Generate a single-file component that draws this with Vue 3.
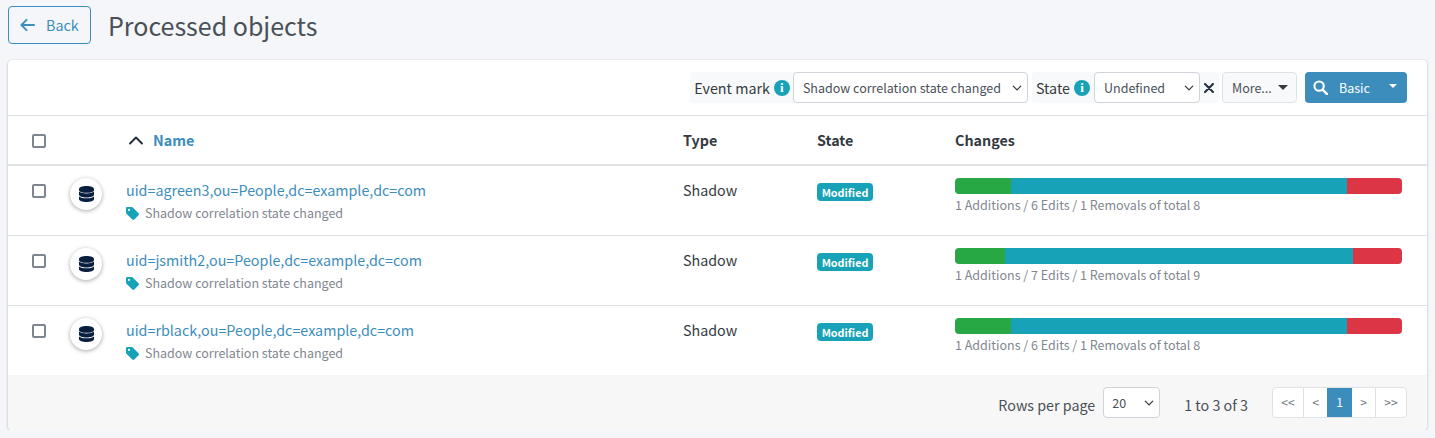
<script setup>
const BAR_WIDTH = 447
const rows = [
  { name: 'uid=agreen3,ou=People,dc=example,dc=com', add: 1, edit: 6, rem: 1 },
  { name: 'uid=jsmith2,ou=People,dc=example,dc=com', add: 1, edit: 7, rem: 1 },
  { name: 'uid=rblack,ou=People,dc=example,dc=com', add: 1, edit: 6, rem: 1 },
]
const total = (r) => r.add + r.edit + r.rem
const segWidth = (v, r) => Math.ceil((BAR_WIDTH * v) / total(r)) + 'px'
const pages = ['<<', '<', '1', '>', '>>']
</script>

<template>
  <div class="page">
    <header class="head">
      <button class="back" type="button">
        <svg class="back-icon" viewBox="0 0 16 14" width="15" height="14" aria-hidden="true">
          <path d="M7 1.500 1.500 7 7 12.500M2 7h13" fill="none" stroke="currentColor" stroke-width="2" stroke-linecap="round" stroke-linejoin="round" />
        </svg>
        <span>Back</span>
      </button>
      <h1 class="title">Processed objects</h1>
    </header>

    <section class="card">
      <div class="toolbar">
        <div class="group">
          <label class="lab">Event mark</label>
          <span class="info">i</span>
          <select class="sel sel-mark"><option>Shadow correlation state changed</option></select>
        </div>
        <div class="group group-state">
          <label class="lab">State</label>
          <span class="info">i</span>
          <select class="sel sel-state"><option>Undefined</option></select>
          <svg class="clear" viewBox="0 0 10 10" width="10" height="10" aria-hidden="true">
            <path d="M1 1l8 8M9 1 1 9" stroke="#212c3a" stroke-width="2" stroke-linecap="round" />
          </svg>
        </div>
        <button class="more" type="button">More...<span class="caret dark"></span></button>
        <button class="basic" type="button">
          <svg class="search" viewBox="0 0 16 16" width="15" height="15" aria-hidden="true">
            <circle cx="6.500" cy="6.500" r="5" fill="none" stroke="#fff" stroke-width="2.200" />
            <path d="M10.500 10.500 15 15" stroke="#fff" stroke-width="2.600" stroke-linecap="round" />
          </svg>
          <span class="basic-label">Basic</span>
          <span class="caret light"></span>
        </button>
      </div>

      <div class="row header">
        <div class="c-first"><span class="check"></span></div>
        <div class="c-name">
          <svg class="sort" viewBox="0 0 16 10" width="16" height="10" aria-hidden="true">
            <path d="M2 8.500 8 2.500l6 6" fill="none" stroke="#24303f" stroke-width="2" stroke-linecap="round" stroke-linejoin="round" />
          </svg>
          <a class="sort-link">Name</a>
        </div>
        <div class="th">Type</div>
        <div class="th">State</div>
        <div class="th">Changes</div>
      </div>

      <div v-for="r in rows" :key="r.name" class="row body">
        <div class="c-first">
          <span class="check"></span>
          <span class="avatar">
            <svg viewBox="0 0 15 16" width="15" height="16" aria-hidden="true">
              <path d="M0 3C0 1.300 3.400 0 7.500 0S15 1.300 15 3v.9c0 1.700-3.400 2.900-7.500 2.900S0 5.600 0 3.900V3Z" fill="#081f3f" />
              <path d="M0 5.600C1.500 6.900 4.300 7.500 7.500 7.500S13.500 6.900 15 5.600v3.200c0 1.600-3.400 2.800-7.500 2.800S0 10.400 0 8.800V5.600Z" fill="#081f3f" />
              <path d="M0 10.500c1.500 1.300 4.300 1.800 7.500 1.800s6-.5 7.500-1.800v2.700c0 1.600-3.400 2.800-7.500 2.800S0 14.800 0 13.200v-2.700Z" fill="#081f3f" />
            </svg>
          </span>
        </div>
        <div class="cell-name">
          <a class="link">{{ r.name }}</a>
          <div class="mark">
            <svg class="tag" viewBox="0 0 14 14" width="13" height="13" aria-hidden="true">
              <path d="M0 1.300C0 .6.600 0 1.300 0h4.900c.4 0 .8.200 1.100.5l6.200 6.200c.6.600.6 1.500 0 2.100l-4.500 4.600c-.6.600-1.600.6-2.200 0L.5 7.300C.2 7 0 6.600 0 6.200V1.300Zm3.200.7a1.100 1.100 0 1 0 0 2.200 1.100 1.100 0 0 0 0-2.200Z" fill="#17a2b8" fill-rule="evenodd" />
            </svg>
            <span>Shadow correlation state changed</span>
          </div>
        </div>
        <div class="td">Shadow</div>
        <div class="td"><span class="badge">Modified</span></div>
        <div class="changes">
          <div class="bar">
            <span class="seg add" :style="{ width: segWidth(r.add, r) }"></span>
            <span class="seg edit" :style="{ width: segWidth(r.edit, r) }"></span>
            <span class="seg rem"></span>
          </div>
          <div class="summary">{{ r.add }} Additions / {{ r.edit }} Edits / {{ r.rem }} Removals of total {{ total(r) }}</div>
        </div>
      </div>

      <footer class="foot">
        <span class="rpp">Rows per page</span>
        <select class="sel sel-rows"><option>20</option></select>
        <span class="count">1 to 3 of 3</span>
        <nav class="pager">
          <a v-for="p in pages" :key="p" class="pg" :class="{ on: p === '1' }">{{ p }}</a>
        </nav>
      </footer>
    </section>
  </div>
</template>

<style>
html, body { margin: 0; background: #f4f6f9; }
</style>

<style scoped>
.page {
  font-family: "Noto Sans CJK SC", "Noto Sans", sans-serif;
  font-size: 14.300px;
  line-height: 22px;
  color: #343a40;
  padding: 6px 8px 0;
}
.head { display: flex; align-items: center; height: 38px; gap: 17px; }
.back {
  box-sizing: border-box; width: 83px; height: 38px; flex: none;
  display: flex; align-items: center; gap: 11px; padding: 0 11px;
  border: 1px solid #3c8dbc; border-radius: 4px; background: transparent;
  color: #3c8dbc; font: inherit;
}
.back-icon { flex: none; }
.title { margin: 0; font-size: 25px; line-height: 38px; font-weight: 400; color: #495057; }
.card {
  margin-top: 16px; background: #fff; border-radius: 4px; overflow: hidden;
  box-shadow: 0 0 1px rgba(0,0,0,.2), 0 1px 3px rgba(0,0,0,.2);
}
.toolbar {
  display: flex; justify-content: flex-end; align-items: flex-start;
  height: 56px; box-sizing: border-box; padding: 12px 20px 0 0; border-bottom: 1px solid #dee2e6;
}
.group {
  display: flex; align-items: center; height: 31px; background: #f8f9fa;
  border-radius: 4px; padding-left: 4px;
}
.group-state { margin-left: 4px; margin-right: 3px; padding-right: 5px; }
.lab { color: #343a40; margin-right: 4px; }
.info {
  width: 16px; height: 16px; border-radius: 50%; background: #17a2b8; color: #fff;
  font-family: "Liberation Serif", serif; font-size: 13px; font-weight: 700; line-height: 16px;
  text-align: center; margin-right: 3px; flex: none;
}
.group-state .info { margin-right: 4px; }
.sel {
  appearance: none; box-sizing: border-box; height: 31px; flex: none;
  border: 1px solid #ced4da; border-radius: 4px; padding: 0 20px 0 9px;
  font: inherit; font-size: 12.500px; color: #495057; background-color: #fff;
  background-image: url("data:image/svg+xml,%3csvg xmlns='http://www.w3.org/2000/svg' viewBox='0 0 16 16'%3e%3cpath fill='none' stroke='%23343a40' stroke-linecap='round' stroke-linejoin='round' stroke-width='2' d='m2 5 6 6 6-6'/%3e%3c/svg%3e");
  background-repeat: no-repeat; background-position: right 5px center; background-size: 10px 10px;
}
.sel-mark { width: 235px; }
.sel-state { width: 106px; }
.sel-rows { width: 57px; padding-left: 8px; }
.clear { margin-left: 4px; flex: none; }
.more {
  box-sizing: border-box; width: 75px; height: 31px; padding: 0 8px 0 9px;
  display: flex; align-items: center; justify-content: space-between;
  border: 1px solid #dee2e6; border-radius: 4px; background: #f8f9fa;
  font: inherit; font-size: 12.500px; color: #495057;
}
.basic {
  box-sizing: border-box; width: 102px; height: 31px; margin-left: 8px; padding: 0 8px 0 8px;
  display: flex; align-items: center;
  border: 0; border-radius: 4px; background: #3c8dbc; color: #fff;
  font: inherit; font-size: 12.500px;
}
.search { flex: none; }
.basic-label { margin-left: 11px; flex: 1; text-align: left; }
.caret { width: 0; height: 0; border-left: 5px solid transparent; border-right: 5px solid transparent; }
.caret.dark { border-top: 5px solid #343a40; }
.caret.light { border-top: 4px solid #fff; margin-bottom: 3px; margin-right: 2px; border-left-width: 4px; border-right-width: 4px; }

.row { display: grid; grid-template-columns: 118px 557px 134px 138px 1fr; }
.header { height: 50px; box-sizing: border-box; border-bottom: 2px solid #dee2e6; align-items: center; }
.body { height: 70px; box-sizing: border-box; border-bottom: 1px solid #dee2e6; padding-top: 12px; }
.body:last-of-type { border-bottom: 0; height: 69px; }
.c-first { display: flex; align-items: flex-start; padding-left: 24px; gap: 24px; }
.header .c-first { align-items: center; }
.header .check { margin-top: 2px; }
.check {
  box-sizing: border-box; width: 14px; height: 14px; flex: none;
  border: 2px solid #7f8491; border-radius: 2px; background: #fff;
}
.body .check { margin-top: 6px; }
.avatar {
  width: 32px; height: 32px; flex: none; border-radius: 50%; background: #fff;
  box-shadow: 0 1px 4px rgba(0,0,0,.35);
  display: flex; align-items: center; justify-content: center;
}
.c-name { display: flex; align-items: center; gap: 9px; padding-left: 2px; }
.sort { flex: none; }
.sort-link { color: #3c8dbc; font-weight: 700; }
.th { font-weight: 700; color: #343a40; }
.link { color: #3c8dbc; display: block; line-height: 23px; }
.mark { display: flex; align-items: center; gap: 6px; font-size: 12.500px; color: #7f8791; line-height: 18px; margin-top: 3px; }
.tag { flex: none; }
.td { line-height: 23px; }
.badge {
  display: inline-block; width: 56px; height: 18px; border-radius: 4px; background: #17a2b8;
  color: #fff; font-size: 10.800px; font-weight: 700; line-height: 18px; text-align: center; vertical-align: top; margin-top: 5px;
}
.changes { padding-right: 25px; }
.bar { display: flex; height: 16px; border-radius: 4px; overflow: hidden; }
.seg { display: block; height: 100%; flex: none; }
.add { background: #28a745; }
.edit { background: #17a2b8; }
.rem { background: #dc3545; flex: 1; }
.summary { font-size: 12.500px; color: #7f8791; line-height: 22px; }
.foot {
  height: 55px; box-sizing: border-box; background: #f7f7f7; padding: 12px 20px 0 0;
  display: flex; justify-content: flex-end; align-items: flex-start;
}
.rpp { line-height: 35px; color: #495057; }
.sel-rows { margin-left: 8px; }
.count { margin-left: 24px; margin-right: 24px; line-height: 35px; color: #495057; }
.pager { display: flex; height: 31px; box-sizing: border-box; border: 1px solid #dee2e6; border-radius: 4px; background: #fff; overflow: hidden; }
.pg {
  box-sizing: border-box; text-align: center; font-size: 12px; line-height: 28px; color: #6c757d;
  border-left: 1px solid #dee2e6; width: 24px;
}
.pg:nth-child(1) { border-left: 0; width: 30px; }
.pg:nth-child(3) { width: 25px; border-left: 0; }
.pg:nth-child(4) { width: 23px; border-left: 0; }
.pg:nth-child(5) { width: 31px; }
.pg.on { background: #3c8dbc; color: #fff; }
</style>
